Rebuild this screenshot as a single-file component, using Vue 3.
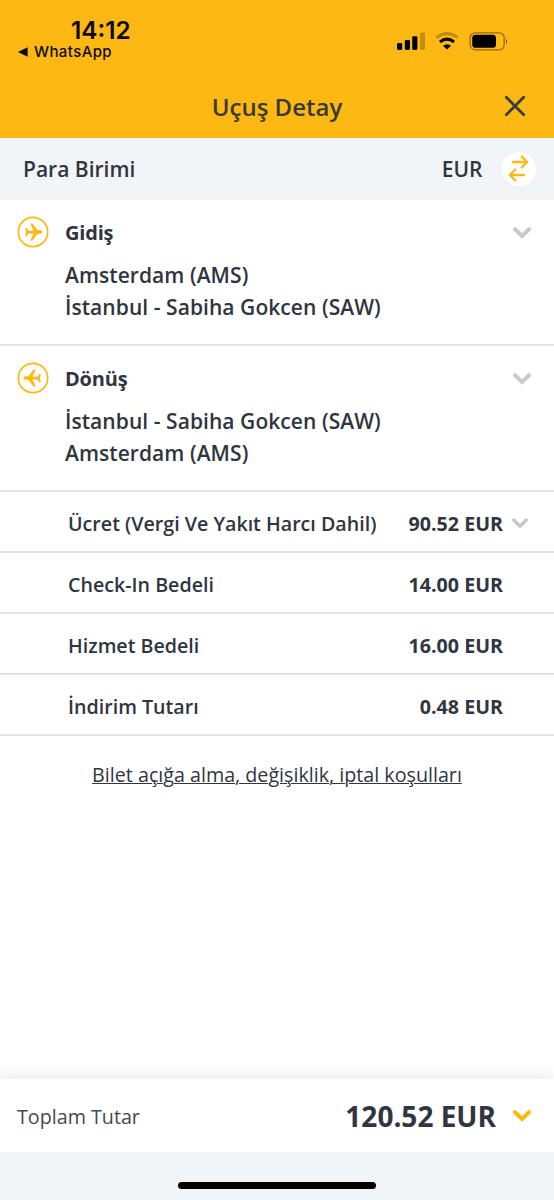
<script setup>
const legs = [
  { title: 'Gidiş', from: 'Amsterdam (AMS)', to: 'İstanbul - Sabiha Gokcen (SAW)', back: false },
  { title: 'Dönüş', from: 'İstanbul - Sabiha Gokcen (SAW)', to: 'Amsterdam (AMS)', back: true },
]
const fees = [
  { label: 'Ücret (Vergi Ve Yakıt Harcı Dahil)', amount: '90.52 EUR', open: true },
  { label: 'Check-In Bedeli', amount: '14.00 EUR' },
  { label: 'Hizmet Bedeli', amount: '16.00 EUR' },
  { label: 'İndirim Tutarı', amount: '0.48 EUR' },
]
</script>

<template>
  <div class="screen">
    <header class="top">
      <div class="status">
        <div class="clock">
          <div class="time">14:12</div>
          <div class="back-app">
            <svg width="10" height="10" viewBox="0 0 10 10"><path d="M0 5 9.6.3v9.4z" fill="#0b0a05" /></svg>
            <span>WhatsApp</span>
          </div>
        </div>
        <svg class="indicators" width="112" height="20" viewBox="0 0 112 20">
          <rect x="0" y="11" width="5.2" height="7" rx="1.4" />
          <rect x="7.8" y="8" width="5.2" height="10" rx="1.4" />
          <rect x="15.2" y="4.2" width="5.2" height="13.8" rx="1.4" />
          <rect x="23" y="0.4" width="5" height="17.6" rx="1.4" opacity=".22" />
          <path d="M39.4 5.5Q50 -2.6 60.6 5.5" fill="none" stroke="#000" stroke-width="3" opacity=".24" />
          <path d="M43 10Q50 4.4 57 10" fill="none" stroke="#000" stroke-width="3.2" />
          <path d="M46 13.8Q50 10.6 54 13.8L50 17.6z" />
          <rect x="73.2" y="0.8" width="34" height="17" rx="5" fill="none" stroke="#000" stroke-opacity=".42" stroke-width="1.3" />
          <rect x="75.2" y="2.8" width="23.8" height="13" rx="3.4" />
          <path d="M109 6.4q2.4 2.8 0 5.8z" opacity=".5" />
        </svg>
      </div>
      <div class="title-bar">
        <h1>Uçuş Detay</h1>
        <svg class="close" width="22" height="22" viewBox="0 0 22 22"><path d="M2.3 2.3 19.7 19.7M19.7 2.3 2.3 19.7" /></svg>
      </div>
    </header>

    <section class="currency">
      <span class="currency-label">Para Birimi</span>
      <span class="code">EUR</span>
      <span class="swap">
        <svg width="34" height="34" viewBox="0 0 34 34">
          <path d="M10.8 10H25M19.7 4.5 25.2 10l-5.5 5.5M22 23H8M13.3 17.5 7.8 23l5.5 5.5" />
        </svg>
      </span>
    </section>

    <section v-for="leg in legs" :key="leg.title" class="leg">
      <svg class="plane" :class="{ back: leg.back }" width="32" height="32" viewBox="0 0 32 32">
        <circle cx="16" cy="16" r="14.7" fill="none" stroke="#fdb813" stroke-width="1.7" />
        <path fill="#fdb813" transform="translate(1 1.2) scale(.93)" d="M7.6 11.5h1.5l2.5 3h5L13.2 6.8h2.1l6 7.3h2.8c1.4 0 2.2.9 2.2 1.9s-.8 1.9-2.2 1.9h-2.8l-6 7.3h-2.1l3.4-7.7h-5l-2.5 3H7.6l1.2-4.5z" />
      </svg>
      <div class="route">
        <h2>{{ leg.title }}</h2>
        <p>{{ leg.from }}</p>
        <p>{{ leg.to }}</p>
      </div>
      <svg class="chevron" width="20" height="14" viewBox="0 0 20 14"><path d="M3 3.2 10 10 17 3.2" /></svg>
    </section>

    <section class="fees">
      <div v-for="fee in fees" :key="fee.label" class="fee">
        <span class="fee-label">{{ fee.label }}</span>
        <strong>{{ fee.amount }}</strong>
        <svg v-if="fee.open" class="chevron small" width="18" height="13" viewBox="0 0 20 14"><path d="M3 3.2 10 10 17 3.2" /></svg>
      </div>
    </section>

    <div class="rules"><a>Bilet açığa alma, değişiklik, iptal koşulları</a></div>

    <footer class="total">
      <span class="total-label">Toplam Tutar</span>
      <strong>120.52 EUR</strong>
      <svg class="chevron accent" width="20" height="14" viewBox="0 0 20 14"><path d="M3 3.2 10 10 17 3.2" /></svg>
    </footer>
    <div class="home"><i></i></div>
  </div>
</template>

<style>
body { margin: 0; background: #fff; }
</style>

<style scoped>
.screen { width: 554px; height: 1200px; display: flex; flex-direction: column; overflow: hidden; background: #fff; color: #303540; font-family: "Open Sans", "Noto Sans", sans-serif; font-size: 21px; font-weight: 600; }
h1, h2, p { margin: 0; }
.top { height: 137.5px; flex: none; background: #fdb813; }
.status { height: 76px; display: flex; justify-content: space-between; box-sizing: border-box; padding: 18px 45px 0 18px; color: #0b0a05; font-family: Inter, sans-serif; }
.time { margin-left: 53px; font-size: 24.3px; font-weight: 600; line-height: 25px; }
.back-app { display: flex; align-items: center; gap: 6px; font-size: 15px; font-weight: 500; line-height: 18px; letter-spacing: .4px; }
.indicators { margin-top: 14px; }
.title-bar { height: 61px; display: grid; grid-template-columns: 1fr auto 1fr; align-items: center; }
h1 { grid-column: 2; font-size: 24px; font-weight: 600; line-height: 32px; color: #3a3a35; }
.close { justify-self: end; margin-right: 28.5px; margin-top: -1px; fill: none; stroke: #393d3b; stroke-width: 2.8; stroke-linecap: round; }
.currency { height: 62px; flex: none; display: flex; align-items: center; box-sizing: border-box; padding: 0 18.5px 0 23px; background: #f1f5f8; }
.currency-label, .code { padding-top: 1px; }
.currency-label { flex: 1; }
.swap { width: 34px; height: 34px; margin-left: 19px; border-radius: 50%; background: #fff; }
.swap svg { display: block; fill: none; stroke: #fdb813; stroke-width: 2.3; stroke-linecap: round; stroke-linejoin: round; }
.leg { height: 146.3px; flex: none; display: flex; align-items: flex-start; box-sizing: border-box; padding: 16.5px 22px 0 16.5px; border-bottom: 2px solid #e2e3e4; }
.plane { flex: none; }
.back { transform: scaleX(-1); }
.route { flex: 1; margin-left: 16.5px; padding-top: .5px; line-height: 32px; letter-spacing: .06px; }
h2 { font-size: 20px; font-weight: 700; line-height: 32px; margin-bottom: 10px; letter-spacing: -.2px; }
.chevron { flex: none; fill: none; stroke: #c8c9ca; stroke-width: 4; stroke-linecap: round; stroke-linejoin: miter; }
.leg .chevron { margin-top: 9.5px; }
.fee { height: 61px; display: flex; align-items: center; box-sizing: border-box; padding: 4px 51px 0 68px; border-bottom: 2px solid #e2e3e4; font-size: 19.65px; }
.fee-label { flex: 1; white-space: nowrap; }
.fee strong { font-weight: 700; }
.fee .small { margin-left: 8px; margin-right: -26px; }
.rules { flex: 1; padding-top: 25px; text-align: center; font-size: 19.7px; font-weight: 400; line-height: 27px; }
.rules a { text-decoration: underline; text-decoration-thickness: 1px; }
.total { height: 73px; flex: none; display: flex; align-items: center; box-sizing: border-box; padding: 1px 22px 0 17px; background: #fff; box-shadow: 0 -2px 16px rgba(50, 50, 80, .12); }
.total-label { flex: 1; font-size: 19.7px; font-weight: 400; color: #454952; }
.total strong { font-size: 28px; font-weight: 700; margin-right: 16px; }
.accent { stroke: #fdb813; }
.home { height: 48px; flex: none; display: flex; justify-content: center; align-items: flex-start; box-sizing: border-box; padding-top: 29.5px; background: #f1f5f8; position: relative; }
.home i { width: 198px; height: 7px; border-radius: 4px; background: #000; }
</style>
